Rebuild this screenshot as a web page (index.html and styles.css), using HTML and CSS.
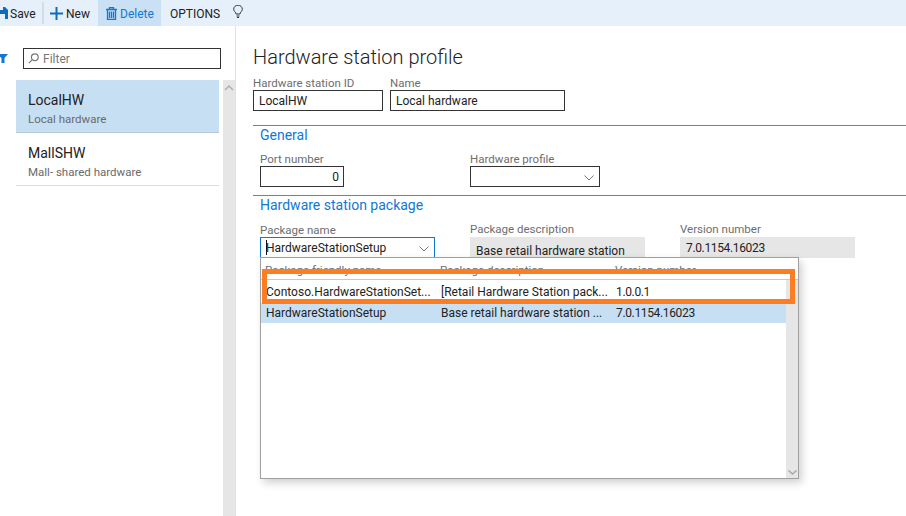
FILE: index.html
```html
<!DOCTYPE html>
<html lang="en">
<head>
    <meta charset="UTF-8">
    <meta name="viewport" content="width=device-width, initial-scale=1.0">
    <title>Hardware station profile</title>
    <link rel="stylesheet" href="styles.css">
</head>
<body>
    <div class="toolbar">
        <div class="tool tool-save">
            <svg class="ico-save" width="8" height="12" viewBox="0 0 8 12"><path d="M-4 0H5L8 3V12H-4Z" fill="#0f6cbd"/><rect x="-2" y="7" width="7" height="5" fill="#e6f0fa"/><rect x="-2" y="0" width="5" height="3" fill="#e6f0fa"/></svg>
            <span>Save</span>
        </div>
        <div class="tool-sep"></div>
        <div class="tool tool-new">
            <svg width="13" height="13" viewBox="0 0 13 13"><path d="M6.5 0V13M0 6.5H13" stroke="#0f6cbd" stroke-width="2"/></svg>
            <span>New</span>
        </div>
        <div class="tool tool-delete">
            <svg width="11" height="13" viewBox="0 0 11 13" fill="none" stroke="#0f78d4" stroke-width="1.300"><path d="M0 2.500H11M3.500 2V.7H7.500V2M1.500 3V12.300H9.500V3M3.500 4.500V11M5.500 4.500V11M7.500 4.500V11"/></svg>
            <span>Delete</span>
        </div>
        <div class="tool tool-options"><span>OPTIONS</span></div>
        <svg class="ico-bulb" width="10" height="13" viewBox="0 0 10 13" fill="none" stroke="#333"><path d="M3 9C3 7 .7 6.500 .7 4.200A4.300 4 0 0 1 9.300 4.200C9.300 6.500 7 7 7 9ZM3.500 11H6.500M4 12.500H6"/></svg>
    </div>

    <div class="page">
        <aside class="sidebar">
            <div class="filter-row">
                <svg class="ico-funnel" width="8" height="9" viewBox="0 0 8 9"><path d="M-3 0H8L4.500 4V9L1.500 9V4Z" fill="#0f78d4"/></svg>
                <div class="filter">
                    <svg width="11" height="11" viewBox="0 0 11 11" fill="none" stroke="#777" stroke-width="1.200"><circle cx="6.800" cy="4.200" r="3.400"/><path d="M4.300 6.700L.8 10.200"/></svg>
                    <span>Filter</span>
                </div>
            </div>
            <div class="list-wrap">
                <ul class="list">
                    <li class="list-item selected">
                        <div class="item-title">LocalHW</div>
                        <div class="item-sub">Local hardware</div>
                    </li>
                    <li class="list-item">
                        <div class="item-title">MallSHW</div>
                        <div class="item-sub">Mall- shared hardware</div>
                    </li>
                </ul>
                <div class="scrollbar">
                    <svg width="10" height="6" viewBox="0 0 10 6" fill="none" stroke="#b0b0b0" stroke-width="1.500"><path d="M1 5L5 1L9 5"/></svg>
                </div>
            </div>
        </aside>

        <main class="content">
            <h1>Hardware station profile</h1>
            <div class="fields head-fields">
                <div class="field">
                    <label>Hardware station ID</label>
                    <div class="input w-id">LocalHW</div>
                </div>
                <div class="field">
                    <label>Name</label>
                    <div class="input w-name">Local hardware</div>
                </div>
            </div>

            <section class="group">
                <h2>General</h2>
                <div class="fields group-fields">
                    <div class="field col-a">
                        <label>Port number</label>
                        <div class="input w-port num">0</div>
                    </div>
                    <div class="field">
                        <label>Hardware profile</label>
                        <div class="input w-profile select">
                            <svg class="chev" width="10" height="6" viewBox="0 0 10 6" fill="none" stroke="#777"><path d="M.5 .5L5 5L9.500 .5"/></svg>
                        </div>
                    </div>
                </div>
            </section>

            <section class="group group-package">
                <h2>Hardware station package</h2>
                <div class="fields group-fields">
                    <div class="field col-a">
                        <label>Package name</label>
                        <div class="input w-package select focused">
                            <span class="caret"></span>HardwareStationSetup
                            <svg class="chev" width="10" height="6" viewBox="0 0 10 6" fill="none" stroke="#777"><path d="M.5 .5L5 5L9.500 .5"/></svg>
                        </div>
                    </div>
                    <div class="field field-ro">
                        <label>Package description</label>
                        <div class="input readonly w-readonly">Base retail hardware station</div>
                    </div>
                    <div class="field field-ro field-version">
                        <label>Version number</label>
                        <div class="input readonly w-readonly version-box"><span class="version">7.0.1154.16023</span></div>
                    </div>
                </div>
            </section>
        </main>
    </div>

    <div class="popup">
        <div class="popup-head">
            <span class="cell c1">Package friendly name</span>
            <span class="cell c2">Package description</span>
            <span class="cell c3">Version number</span>
        </div>
        <div class="popup-body">
            <div class="rows">
                <div class="row">
                    <span class="cell c1">Contoso.HardwareStationSet...</span>
                    <span class="cell c2">[Retail Hardware Station pack...</span>
                    <span class="cell c3 version">1.0.0.1</span>
                </div>
                <div class="row selected">
                    <span class="cell c1">HardwareStationSetup</span>
                    <span class="cell c2">Base retail hardware station ...</span>
                    <span class="cell c3 version">7.0.1154.16023</span>
                </div>
            </div>
            <div class="popup-scroll">
                <svg width="9" height="5" viewBox="0 0 9 5" fill="none" stroke="#a8a8a8" stroke-width="1.500"><path d="M.5 .5L4.500 4L8.500 .5"/></svg>
            </div>
        </div>
    </div>
    <div class="highlight"></div>
</body>
</html>
```

FILE: styles.css
```css
* {
    box-sizing: border-box;
}
html, body {
    height: 100%;
}
body {
    margin: 0;
    overflow: hidden;
    background: #fff;
    color: #222;
    font-family: Roboto, "Noto Sans", Arial, sans-serif;
    font-size: 12px;
    display: flex;
    flex-direction: column;
}

/* toolbar */
.toolbar {
    height: 26px;
    flex: none;
    background: #e6f0fa;
    display: flex;
    align-items: center;
}
.tool {
    display: flex;
    align-items: center;
    height: 26px;
}
.tool span {
    padding-top: 2px;
}
.tool-save {
    width: 42px;
    gap: 2px;
}
.tool-sep {
    width: 2px;
    height: 22px;
    background: #d4dde6;
}
.tool-new {
    width: 54px;
    padding-left: 6px;
    gap: 3px;
}
.tool-delete {
    width: 63px;
    padding-left: 8px;
    gap: 3px;
    background: #c9e0f5;
    color: #0f78d4;
}
.tool-options {
    padding-left: 9px;
    width: 72px;
}
.ico-bulb {
    margin-top: -4px;
}

/* left list */
.page {
    flex: 1;
    display: flex;
    min-height: 0;
}
.sidebar {
    width: 236px;
    flex: none;
    display: flex;
    flex-direction: column;
    border-right: 1px solid #e1e1e1;
}
.filter-row {
    height: 54px;
    padding-top: 22px;
    display: flex;
    align-items: flex-start;
}
.ico-funnel {
    margin-top: 6px;
}
.filter {
    margin-left: 15px;
    width: 198px;
    height: 21px;
    border: 1px solid #333;
    display: flex;
    align-items: center;
    gap: 4px;
    padding-left: 4px;
    color: #777;
}
.filter span {
    padding-top: 1px;
}
.list-wrap {
    flex: 1;
    display: flex;
    padding-left: 16px;
}
.list {
    list-style: none;
    margin: 0;
    padding: 0;
    width: 203px;
}
.list-item {
    height: 53px;
    padding: 11px 12px 0;
    border-bottom: 1px solid #dcdcdc;
}
.list-item.selected {
    background: #c7dff3;
    border-bottom-color: #bcc9d4;
}
.item-title {
    font-size: 14px;
    line-height: 19px;
    color: #222;
}
.item-sub {
    font-size: 11.5px;
    line-height: 18px;
    color: #6a6a6a;
}
.scrollbar {
    margin-left: 4px;
    width: 12px;
    background: #e6e6e6;
    display: flex;
    justify-content: center;
    align-items: flex-start;
    padding-top: 5px;
}

/* main form */
.content {
    flex: 1;
    padding-left: 17px;
    min-width: 0;
}
h1 {
    font-size: 20px;
    font-weight: 300;
    line-height: 28px;
    margin: 17px 0 0;
    color: #222;
}
.fields {
    display: flex;
}
.head-fields {
    margin-top: 5px;
    gap: 7px;
}
.field label {
    display: block;
    font-size: 11.5px;
    line-height: 14px;
    color: #6e6e6e;
}
.field-ro label {
    position: relative;
    top: -1px;
}
.input {
    height: 21px;
    border: 1px solid #333;
    padding-left: 5px;
    line-height: 21px;
    font-size: 12px;
    color: #222;
    position: relative;
}
.w-id { width: 130px; }
.w-name { width: 175px; }
.w-port { width: 84px; }
.w-profile { width: 130px; }
.w-package { width: 175px; }
.w-readonly { width: 175px; }
.num {
    text-align: right;
    padding-right: 4px;
    line-height: 20px;
}
.select .chev {
    position: absolute;
    right: 5px;
    top: 8px;
}
.focused {
    border-color: #0f78d4;
}
.caret {
    position: absolute;
    left: 5px;
    top: 2px;
    width: 1px;
    height: 15px;
    background: #111;
}
.readonly {
    background: #e6e6e6;
    border: none;
    padding-left: 6px;
    line-height: 29px;
}
.version-box {
    line-height: 23px;
}
.version {
    letter-spacing: -0.35px;
}
.group {
    margin-top: 14px;
    border-top: 1px solid #6f8296;
    padding-left: 7px;
}
.group-package {
    margin-top: 8px;
}
h2 {
    font-size: 14px;
    font-weight: 400;
    line-height: 18px;
    margin: 0;
    color: #0f78d4;
}
.group-fields {
    margin-top: 8px;
}
.group-package .group-fields {
    margin-top: 9px;
}
.col-a {
    width: 210px;
}
.field-version {
    margin-left: 35px;
}

/* lookup popup, lies over the form */
.popup {
    position: absolute;
    left: 260px;
    top: 257px;
    width: 539px;
    height: 222px;
    background: #fff;
    border: 1px solid #a0a0a0;
    box-shadow: 3px 4px 8px rgba(0, 0, 0, 0.18);
    display: flex;
    flex-direction: column;
}
.popup-head {
    height: 22px;
    flex: none;
    display: flex;
    align-items: flex-start;
    padding-top: 5px;
    line-height: 14px;
    color: #6e6e6e;
    font-size: 11.5px;
    border-bottom: 1px solid #c8c8c8;
}
.popup-head .c1 {
    padding-left: 4px;
    width: 179px;
}
.popup-body {
    flex: 1;
    display: flex;
    min-height: 0;
}
.rows {
    flex: 1;
}
.row {
    height: 23px;
    display: flex;
    align-items: center;
}
.row.selected {
    height: 20px;
    background: #c7dff3;
}
.cell {
    white-space: nowrap;
}
.c1 {
    width: 180px;
    padding-left: 5px;
}
.c2 {
    width: 175px;
}
.popup-scroll {
    width: 12px;
    background: #e6e6e6;
    display: flex;
    align-items: flex-end;
    justify-content: center;
    padding-bottom: 3px;
}

/* annotation box drawn on the screenshot */
.highlight {
    position: absolute;
    left: 262px;
    top: 269px;
    width: 533px;
    height: 35px;
    border: 5px solid #fd7d23;
}
```
